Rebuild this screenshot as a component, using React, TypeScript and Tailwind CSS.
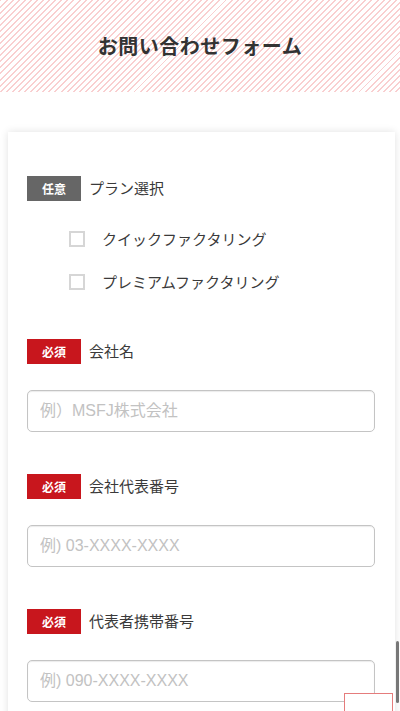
import { useState } from 'react';

type Field = {
  label: string;
  placeholder: string;
};

const fields: Field[] = [
  { label: '会社名', placeholder: '例）MSFJ株式会社' },
  { label: '会社代表番号', placeholder: '例) 03-XXXX-XXXX' },
  { label: '代表者携帯番号', placeholder: '例) 090-XXXX-XXXX' },
];

const plans: string[] = ['クイックファクタリング', 'プレミアムファクタリング'];

const font = { fontFamily: '"Noto Sans CJK JP", "Noto Sans", sans-serif' };

function Badge({ required }: { required: boolean }): JSX.Element {
  return (
    <span
      className={`flex h-[25px] w-[54px] shrink-0 items-center justify-center text-[12px] font-bold text-white ${
        required ? 'bg-[#c8161d]' : 'bg-[#666666]'
      }`}
    >
      {required ? '必須' : '任意'}
    </span>
  );
}

export default function App(): JSX.Element {
  const [checked, setChecked] = useState<boolean[]>([false, false]);

  const toggle = (i: number): void => {
    setChecked((prev) => prev.map((v, j) => (j === i ? !v : v)));
  };

  return (
    <div className="relative h-[711px] overflow-hidden bg-white text-[#333333]" style={font}>
      <header className="flex h-[92px] items-center justify-center bg-[repeating-linear-gradient(135deg,#f9cfd0_0_1.4px,#ffffff_1.4px_4.3px)]">
        <h1 className="text-[20px] font-bold tracking-[0.5px] text-[#333333]">お問い合わせフォーム</h1>
      </header>

      <div className="mt-10 ml-2 mr-[5px] bg-white pt-11 pl-[19px] pr-5 pb-10 shadow-[0_0_8px_rgba(0,0,0,0.12)]">
        <div className="flex items-center gap-2">
          <Badge required={false} />
          <span className="text-[15px] text-[#3a3a3a]">プラン選択</span>
        </div>

        <div className="mt-[30px] flex flex-col gap-[27px] pl-[42px]">
          {plans.map((p, i) => (
            <label key={p} className="flex cursor-pointer items-center gap-[17px]" onClick={() => toggle(i)}>
              <span
                className={`h-4 w-4 border-2 border-[#d6d6d6] ${checked[i] ? 'bg-[#c8161d]' : 'bg-white'}`}
              ></span>
              <span className="text-[15px] leading-4 text-[#3a3a3a]">{p}</span>
            </label>
          ))}
        </div>

        <div className="mt-[49px] flex flex-col gap-[42px]">
          {fields.map((f) => (
            <div key={f.label}>
              <div className="flex items-center gap-2">
                <Badge required />
                <span className="text-[15px] text-[#3a3a3a]">{f.label}</span>
              </div>
              <input
                type="text"
                placeholder={f.placeholder}
                style={{ fontFamily: '"Liberation Sans", "Noto Sans CJK JP", sans-serif' }}
                className="mt-[26px] h-[42px] w-full rounded-[5px] border border-[#c4c4c4] px-3 text-[16px] shadow-[inset_0_1px_1px_rgba(0,0,0,0.08)] outline-none placeholder:text-[#c2c2c2]"
              />
            </div>
          ))}
        </div>
      </div>

      <div className="absolute top-[641px] right-px h-[62px] w-[3px] rounded-sm bg-[#777777]"></div>
      <button className="absolute top-[693px] left-[344px] h-[40px] w-[49px] border border-[#e57c7c] bg-white"></button>
    </div>
  );
}
